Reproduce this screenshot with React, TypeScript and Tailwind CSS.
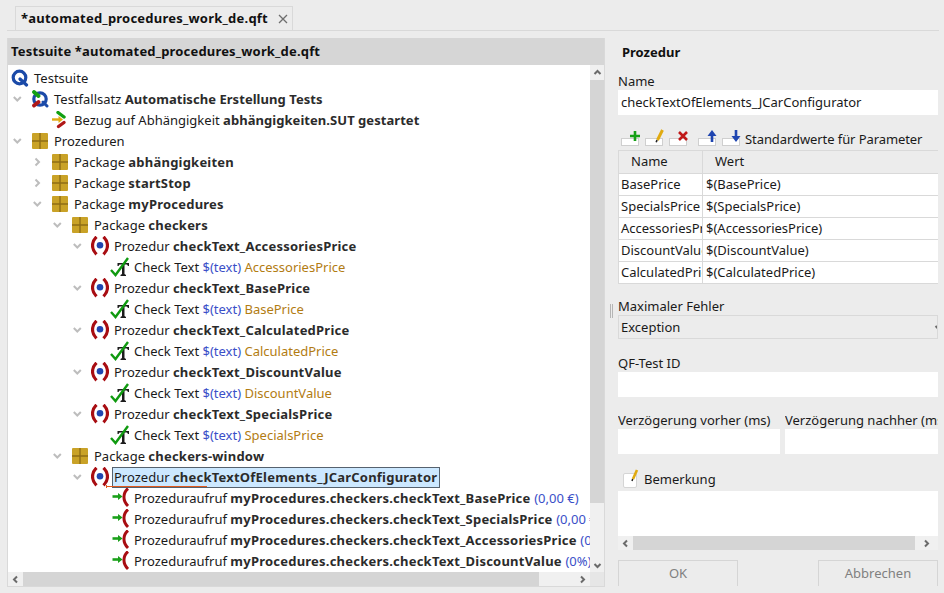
import React from "react";

const font = { fontFamily: '"Noto Sans", "Open Sans", sans-serif' };

function Chevron({ open, x }: { open: boolean; x: number }) {
  return (
    <svg width="10" height="10" viewBox="0 0 10 10" className="absolute top-[5px]" style={{ left: x }}>
      {open ? (
        <path d="M0.8 3 L4.3 6.5 L7.8 3" fill="none" stroke="#bdbdbd" strokeWidth="2" />
      ) : (
        <path d="M2.5 1.5 L6 5 L2.5 8.5" fill="none" stroke="#bdbdbd" strokeWidth="2" />
      )}
    </svg>
  );
}

function IconQ() {
  return (
    <svg width="18" height="18" viewBox="0 0 18 18">
      <circle cx="8.5" cy="8.5" r="6.3" fill="none" stroke="#1b4aa8" strokeWidth="3.2" />
      <path d="M9 10 L15.5 16" stroke="#1b4aa8" strokeWidth="3.2" strokeLinecap="round" />
    </svg>
  );
}
function IconSet() {
  return (
    <svg width="18" height="18" viewBox="0 0 18 18">
      <circle cx="9" cy="9" r="6.2" fill="none" stroke="#1b4aa8" strokeWidth="3.2" />
      <path d="M12 12 L16 16" stroke="#1b4aa8" strokeWidth="3" strokeLinecap="round" />
      <path d="M3 2 L7.5 6" stroke="#12a012" strokeWidth="3.8" strokeLinecap="round" />
      <path d="M3 15.5 L7.5 12" stroke="#b01818" strokeWidth="3.8" strokeLinecap="round" />
    </svg>
  );
}
function IconDep() {
  return (
    <svg width="18" height="18" viewBox="0 0 18 18">
      <path d="M7 1.5 L13 6" stroke="#12a012" strokeWidth="3.4" strokeLinecap="round" />
      <path d="M7.5 15.5 L13 11.5" stroke="#b01818" strokeWidth="3.4" strokeLinecap="round" />
      <path d="M1 8.5 H8" stroke="#e0aa10" strokeWidth="2.4" />
      <path d="M7.5 5 L12 8.5 L7.5 12 Z" fill="#e0aa10" />
    </svg>
  );
}
function IconPkg() {
  return (
    <svg width="16" height="16" viewBox="0 0 16 16">
      <rect width="16" height="16" rx="1" fill="#c9a227" />
      <path d="M8 0 V16 M0 8 H16" stroke="#8f6d16" strokeWidth="1.4" />
    </svg>
  );
}
function IconProc() {
  return (
    <svg width="18" height="20" viewBox="0 0 18 20">
      <path d="M5.5 0.8 C0.2 6 0.2 13 5.5 18.4" fill="none" stroke="#a80d12" strokeWidth="3.2" />
      <path d="M12.5 0.8 C17.8 6 17.8 13 12.5 18.4" fill="none" stroke="#a80d12" strokeWidth="3.2" />
      <circle cx="9" cy="9.2" r="3.3" fill="#1f45b0" />
    </svg>
  );
}
function IconCheck() {
  return (
    <svg width="20" height="20" viewBox="0 0 20 20">
      <path d="M7.5 6 H19 V9 H18 L17 7.5 H14.5 V17 L16 18 V19 H10.5 V18 L12 17 V7.5 H9.5 L8.5 9 H7.5 Z" fill="#1c1c1c" />
      <path d="M1 13 L5.5 18 L18 1" fill="none" stroke="#109a10" strokeWidth="2.4" />
    </svg>
  );
}
function IconCall() {
  return (
    <svg width="20" height="20" viewBox="0 0 20 20">
      <path d="M0.5 8.5 H7" stroke="#1aa01a" strokeWidth="2.6" />
      <path d="M6 5 L10.5 8.5 L6 12 Z" fill="#1aa01a" />
      <path d="M16 0.5 C10.6 5 10.6 13 16 18" fill="none" stroke="#a80d12" strokeWidth="3" />
    </svg>
  );
}

type Seg = { t: string; k?: "b" | "c" | "v" | "n" };
const N = (t: string): Seg => ({ t });
const B = (t: string): Seg => ({ t, k: "b" });
const C = (t: string): Seg => ({ t, k: "c" });
const V = (t: string): Seg => ({ t, k: "v" });
const O = (t: string): Seg => ({ t, k: "n" });

function Segs({ segs }: { segs: Seg[] }) {
  return (
    <>
      {segs.map((s, i) =>
        s.k === "b" ? (
          <span key={i} className="font-bold tracking-[0.22px] text-[#2b2b2b]">{s.t}</span>
        ) : s.k === "c" ? (
          <span key={i} className="font-bold tracking-[0.05px] text-[#2b2b2b]">{s.t}</span>
        ) : s.k === "v" ? (
          <span key={i} className="text-[#3a4fc8]">{s.t}</span>
        ) : s.k === "n" ? (
          <span key={i} className="text-[#b27c12]">{s.t}</span>
        ) : (
          <span key={i}>{s.t}</span>
        )
      )}
    </>
  );
}

type RowDef = {
  text: number;
  icon: React.ReactNode;
  iconX: number;
  chev?: [boolean, number];
  segs: Seg[];
  selected?: boolean;
};

const proc = (name: string): RowDef => ({
  text: 114,
  icon: <IconProc />,
  iconX: 91,
  chev: [true, 73],
  segs: [N("Prozedur "), B(name)],
});
const check = (name: string): RowDef => ({
  text: 134,
  icon: <IconCheck />,
  iconX: 110,
  segs: [N("Check Text "), V("$(text) "), O(name)],
});
const call = (name: string, val: string): RowDef => ({
  text: 134,
  icon: <IconCall />,
  iconX: 112,
  segs: [N("Prozeduraufruf "), B("myProcedures.checkers." + name + " "), V(val)],
});
const pkg = (name: string, level: number, open: boolean): RowDef => ({
  text: 54 + 20 * level,
  icon: <IconPkg />,
  iconX: 32 + 20 * level,
  chev: [open, 13 + 20 * level],
  segs: [N("Package "), B(name)],
});

const rows: RowDef[] = [
  { text: 34, icon: <IconQ />, iconX: 11, segs: [N("Testsuite")] },
  { text: 54, icon: <IconSet />, iconX: 31, chev: [true, 13], segs: [N("Testfallsatz "), C("Automatische Erstellung Tests")] },
  { text: 74, icon: <IconDep />, iconX: 51, segs: [N("Bezug auf Abhängigkeit "), C("abhängigkeiten.SUT gestartet")] },
  { text: 54, icon: <IconPkg />, iconX: 32, chev: [true, 13], segs: [N("Prozeduren")] },
  pkg("abhängigkeiten", 1, false),
  pkg("startStop", 1, false),
  pkg("myProcedures", 1, true),
  pkg("checkers", 2, true),
  proc("checkText_AccessoriesPrice"),
  check("AccessoriesPrice"),
  proc("checkText_BasePrice"),
  check("BasePrice"),
  proc("checkText_CalculatedPrice"),
  check("CalculatedPrice"),
  proc("checkText_DiscountValue"),
  check("DiscountValue"),
  proc("checkText_SpecialsPrice"),
  check("SpecialsPrice"),
  pkg("checkers-window", 2, true),
  { ...proc("checkTextOfElements_JCarConfigurator"), selected: true },
  call("checkText_BasePrice", "(0,00 €)"),
  call("checkText_SpecialsPrice", "(0,00 €)"),
  call("checkText_AccessoriesPrice", "(0,00 €)"),
  call("checkText_DiscountValue", "(0%)"),
  call("checkText_CalculatedPrice", "(0,00 €)"),
];

function TreeRow({ r }: { r: RowDef }) {
  return (
    <div className="relative h-[21px] whitespace-nowrap text-[13px] leading-[21px] text-[#1a1a1a]">
      {r.chev && <Chevron open={r.chev[0]} x={r.chev[1] - 8} />}
      <div className="absolute top-[-0.5px] flex h-[21px] items-center" style={{ left: r.iconX - 8 }}>
        {r.icon}
      </div>
      {r.selected ? (
        <>
          <span
            className="absolute top-0 h-[21px] border border-[#56626e] bg-[#cce8ff] pl-[1px] pr-[2px] leading-[19px]"
            style={{ left: r.text - 10 }}
          >
            <Segs segs={r.segs} />
          </span>
          <span className="absolute left-[98px] top-[19px] h-[1px] w-[101px] bg-[#e2591c]" />
          <span className="absolute left-[98px] top-[18px] h-[3px] w-[1px] bg-[#e2591c]" />
        </>
      ) : (
        <span className="absolute top-0" style={{ left: r.text - 8 }}>
          <Segs segs={r.segs} />
        </span>
      )}
    </div>
  );
}

function Arrow({ dir, color = "#6b6b6b" }: { dir: "l" | "r" | "d" | "u"; color?: string }) {
  const d =
    dir === "l"
      ? "M6 1.5 L3 4.5 L6 7.5"
      : dir === "r"
      ? "M3 1.5 L6 4.5 L3 7.5"
      : dir === "u"
      ? "M1.5 6 L4.5 3 L7.5 6"
      : "M1.5 3 L4.5 6 L7.5 3";
  return (
    <svg width="9" height="9" viewBox="0 0 9 9">
      <path d={d} fill="none" stroke={color} strokeWidth="2" />
    </svg>
  );
}

function ToolBtn({ children, gap }: { children: React.ReactNode; gap?: string }) {
  return (
    <div className={"relative h-[15px] w-[24px] " + (gap ?? "")}>
      <div className="absolute bottom-[1px] left-0 h-[8px] w-[18px] border border-[#cfcfcf] bg-white" />
      <svg width="14" height="14" viewBox="0 0 14 14" className="absolute left-[7px] top-[-3px]">
        {children}
      </svg>
    </div>
  );
}

function Label({ children, className = "" }: { children: React.ReactNode; className?: string }) {
  return <div className={"h-[18px] whitespace-nowrap text-[13px] leading-[18px] text-[#1a1a1a] " + className}>{children}</div>;
}

const params: [string, string][] = [
  ["BasePrice", "$(BasePrice)"],
  ["SpecialsPrice", "$(SpecialsPrice)"],
  ["AccessoriesPrice", "$(AccessoriesPrice)"],
  ["DiscountValue", "$(DiscountValue)"],
  ["CalculatedPrice", "$(CalculatedPrice)"],
];

export default function App() {
  return (
    <div className="flex h-[593px] w-[944px] flex-col overflow-hidden bg-[#ececec]" style={font}>
      {/* tab bar */}
      <div className="ml-[7px] mr-[5px] h-[31px] shrink-0 border-b border-[#d9d9d9] pl-[8px] pt-[6px]">
        <div className="flex h-[25px] w-[278px] items-center border border-b-0 border-[#d9d9d9] pl-[5px] text-[13px] font-bold tracking-[0.22px] text-[#111]">
          <span className="whitespace-nowrap">*automated_procedures_work_de.qft</span>
          <svg width="10" height="10" viewBox="0 0 10 10" className="ml-[10px]">
            <path d="M1 1 L9 9 M9 1 L1 9" stroke="#6e6e6e" strokeWidth="1.3" />
          </svg>
        </div>
      </div>

      <div className="flex min-h-0 flex-1 pt-[7px]">
        {/* left panel */}
        <div className="ml-[7px] flex h-[549px] w-[598px] shrink-0 flex-col border-b border-r border-l border-[#d9d9d9]">
          <div className="flex h-[27px] shrink-0 items-center whitespace-nowrap bg-[#d6d6d6] pl-[3px] text-[13px] font-bold tracking-[0.17px] text-[#111]">
            Testsuite *automated_procedures_work_de.qft
          </div>
          <div className="flex min-h-0 flex-1">
            <div className="min-w-0 flex-1 overflow-hidden bg-white pt-[3px]">
              {rows.map((r, i) => (
                <TreeRow key={i} r={r} />
              ))}
            </div>
            <div className="flex w-[14px] shrink-0 flex-col bg-[#f0f0f0]">
              <div className="flex h-[15px] items-center justify-center"><Arrow dir="u" /></div>
              <div className="h-[423px] bg-[#d5d5d5]" />
              <div className="flex-1" />
              <div className="flex h-[14px] items-center justify-center"><Arrow dir="d" /></div>
            </div>
          </div>
          <div className="flex h-[14px] shrink-0 bg-[#f0f0f0]">
            <div className="flex w-[15px] items-center justify-center"><Arrow dir="l" /></div>
            <div className="w-[516px] bg-[#d5d5d5]" />
            <div className="flex flex-1 items-center justify-end pr-[3px]"><Arrow dir="r" /></div>
            <div className="w-[14px] bg-[#e6e6e6]" />
          </div>
        </div>

        {/* splitter */}
        <div className="flex w-[13px] shrink-0 items-start justify-center pt-[266px]">
          <div className="h-[14px] w-[3px] border-x border-[#b5b5b5]" />
        </div>

        {/* right panel */}
        <div className="flex h-[548px] w-[320px] shrink-0 flex-col overflow-hidden">
          <div className="h-[28px] shrink-0 pl-[4px] text-[13px] font-bold leading-[28px] text-[#111]">Prozedur</div>
          <Label className="mt-[6px] shrink-0">Name</Label>
          <div className="h-[25px] shrink-0 bg-white pl-[3px] text-[13px] leading-[25px] text-[#1a1a1a]">checkTextOfElements_JCarConfigurator</div>

          <div className="mt-[17px] flex h-[15px] shrink-0 items-end pl-[3px]">
            <ToolBtn>
              <path d="M7 2 V12 M2 7 H12" stroke="#15a015" strokeWidth="2.6" />
            </ToolBtn>
            <ToolBtn>
              <path d="M10.5 1 L5.5 11" stroke="#e0aa10" strokeWidth="3" />
              <path d="M5 11 L4.2 13.2" stroke="#222" strokeWidth="1.6" />
            </ToolBtn>
            <ToolBtn gap="mr-[5px]">
              <path d="M3 3 L11 11 M11 3 L3 11" stroke="#c01818" strokeWidth="2.6" />
            </ToolBtn>
            <ToolBtn>
              <path d="M7 13 V5" stroke="#1f45b0" strokeWidth="2.6" />
              <path d="M2.5 7 L7 1 L11.5 7 Z" fill="#1f45b0" />
            </ToolBtn>
            <ToolBtn>
              <path d="M7 1 V9" stroke="#1f45b0" strokeWidth="2.6" />
              <path d="M2.5 7 L7 13 L11.5 7 Z" fill="#1f45b0" />
            </ToolBtn>
            <span className="ml-[-1px] whitespace-nowrap text-[13px] leading-[15px] tracking-[-0.08px] text-[#1a1a1a]">Standardwerte für Parameter</span>
          </div>

          <div className="mt-[3px] shrink-0 border-t border-[#d9d9d9]">
            <div className="flex h-[22px] border-l border-[#d9d9d9] text-[13px] leading-[21px] text-[#1a1a1a]">
              <div className="w-[84px] shrink-0 border-r border-[#d9d9d9] pl-[12px]">Name</div>
              <div className="pl-[12px]">Wert</div>
            </div>
            {params.map(([k, v]) => (
              <div key={k} className="flex h-[22px] border-l border-t border-[#d9d9d9] bg-white text-[13px] leading-[21px] text-[#1a1a1a]">
                <div className="w-[84px] shrink-0 overflow-hidden whitespace-nowrap border-r border-[#d9d9d9] pl-[2px] pr-[3px]">{k}</div>
                <div className="pl-[3px]">{v}</div>
              </div>
            ))}
            <div className="h-[1px] bg-[#d9d9d9]" />
          </div>

          <Label className="mt-[13px] shrink-0">Maximaler Fehler</Label>
          <div className="flex h-[24px] shrink-0 items-center justify-between overflow-hidden border border-[#d9d9d9] bg-[#ececec] pl-[2px] pt-[1px] text-[13px] text-[#1a1a1a]">
            <span>Exception</span>
            <span className="mr-[-6px] flex"><Arrow dir="d" /></span>
          </div>

          <Label className="mt-[15px] shrink-0">QF-Test ID</Label>
          <div className="h-[25px] shrink-0 bg-white" />

          <div className="mt-[14px] flex shrink-0 gap-[5px]">
            <div className="w-[162px] shrink-0">
              <Label>Verzögerung vorher (ms)</Label>
              <div className="h-[25px] bg-white" />
            </div>
            <div className="w-[153px] shrink-0 overflow-hidden">
              <Label>Verzögerung nachher (ms)</Label>
              <div className="h-[25px] bg-white" />
            </div>
          </div>

          <div className="mt-[16px] flex h-[20px] shrink-0 items-center pl-[5px]">
            <div className="relative mr-[7px] h-[15px] w-[14px] rounded-[2px] border border-[#d5d5d5] bg-white">
              <svg width="12" height="16" viewBox="0 0 12 16" className="absolute left-[5px] top-[-5px]">
                <path d="M8 1 L4 10" stroke="#e0aa10" strokeWidth="2.6" />
                <path d="M3.7 10 L3 12" stroke="#222" strokeWidth="1.5" />
              </svg>
            </div>
            <span className="text-[13px] text-[#1a1a1a]">Bemerkung</span>
          </div>

          <div className="mt-[1px] h-[45px] shrink-0 bg-white" />
          <div className="flex h-[14px] shrink-0 bg-[#f0f0f0]">
            <div className="flex w-[15px] items-center justify-center"><Arrow dir="l" /></div>
            <div className="w-[282px] bg-[#d5d5d5]" />
            <div className="flex flex-1 items-center justify-center"><Arrow dir="r" /></div>
          </div>

          <div className="mt-[10px] flex shrink-0 justify-between">
            <div className="flex h-[27px] w-[120px] items-center justify-center border border-[#d5d5d5] text-[13px] text-[#808080]">OK</div>
            <div className="flex h-[27px] w-[120px] items-center justify-center border border-[#d5d5d5] text-[13px] text-[#808080]">Abbrechen</div>
          </div>
        </div>
      </div>
    </div>
  );
}
